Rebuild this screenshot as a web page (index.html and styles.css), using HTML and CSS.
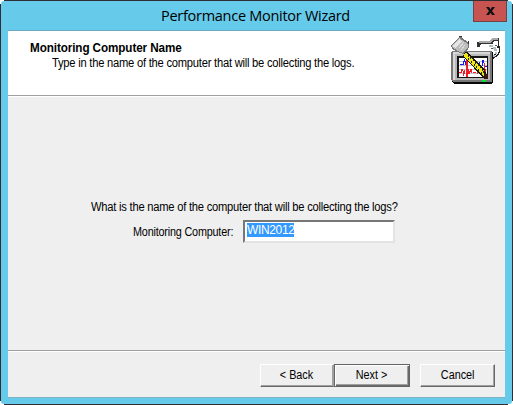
FILE: index.html
```html
<!DOCTYPE html>
<html lang="en">
<head>
<meta charset="utf-8">
<title>Performance Monitor Wizard</title>
<link rel="stylesheet" href="styles.css">
</head>
<body>
<div class="window">
  <header class="titlebar">
    <span class="title">Performance Monitor Wizard</span>
    <button class="close" aria-label="Close"><svg width="9" height="8" viewBox="0 0 9 8"><path d="M0 0h3l1.500 2.300L6 0h3L6 4l3 4H6L4.500 5.700 3 8H0l3-4z" fill="#111"/></svg></button>
  </header>
  <main class="content">
    <section class="banner">
      <div class="heading">
        <h1><span class="fit heading-text">Monitoring Computer Name</span></h1>
        <p class="subtitle"><span class="fit">Type in the name of the computer that will be collecting the logs.</span></p>
      </div>
      <svg class="icon" width="50" height="50" viewBox="0 0 50 50" shape-rendering="crispEdges">
        <path d="M3 17h40v30l-2 2H4l-2-2z" fill="#080808"/>
        <path d="M2 16h40v31H3l-2-2V18z" fill="#777"/>
        <path d="M3 17h37v2H5v26H3z" fill="#d8d8d8"/>
        <path d="M5 19h35v26H5z" fill="#b8b8b8"/>
        <path d="M7 21h31v22H7z" fill="#151515"/>
        <path d="M9 23h28v19H9z" fill="#fff"/>
        <path d="M9 26.500h28M9 30.500h28M9 34.500h28M9 38.500h28" stroke="#c4c4d0"/>
        <path d="M10 29.500h3M13.500 26v4M14.500 24v3M15.500 26v4M24.500 27v4M25 28.500h3M32.500 25v6M33.500 25v3M34 31.500h3M29.500 27v3" stroke="#1818f4" fill="none"/>
        <path d="M9 37.500h2M11.500 34v4M12.500 34v2M13.500 36v5M14.500 35v4M18.500 34v5M19.500 36v3M20.500 34v3M21.500 34v4M23 37.500h3M27.500 36v3M34.500 28v7M35.500 34v3" stroke="#ed1c24" fill="none"/>
        <path d="M17 22v20" stroke="#ed1c24" stroke-width="2"/>
        <path d="M13 19l3-2h1l18 18 2 7v2h-3L14 22z" fill="#181800"/>
        <path d="M13 19l3-1 18 18 1 5h-2L14 21z" fill="#eee51c"/>
        <path d="M18 21h1M20 23h1M18 24h1M23 25h1M21 27h1M25 28h1M24 30h1M28 30h1M26 32h1M30 32h1M28 35h1M32 35h1M31 38h1M33 37h1" stroke="#292900" stroke-width="1.500"/>
        <path d="M34 39h4v5h-3z" fill="#3b1515"/>
        <path d="M32 45h4v2h-4z" fill="#00e332"/>
        <path d="M1 10L9 2h2l8 6v3l-1 4-5 4-3-1-8-4z" fill="#777"/>
        <path d="M2 10L9 3l9 6v3l-5 6-3-1-7-4z" fill="#bcbcbc"/>
        <path d="M3 10l6-6 3 2-6 7-3-1z" fill="#e5e5e5"/>
        <path d="M9 13l5-6M11 15l4-5" fill="none" stroke="#ddd"/>
        <path d="M9 1.500h3M18.500 6v3" stroke="#333"/>
        <path d="M27 10V7l3-1h9l3-3h7v3h-5l-1 3H31l-1 3h-3z" fill="#333"/>
        <path d="M29 7h11l3-3h5" fill="none" stroke="#a9a9a9" stroke-width="2"/>
        <path d="M48.500 6v4l-1 2h2v5l-2 3-4 3v-2l3-3" fill="none" stroke="#252525" stroke-width="1.300"/>
        <path d="M39 11h4M43 13h3M44 15h3M45 18h2M43 21h2" stroke="#b1bcbc" stroke-width="2"/>
        <path d="M41 13h2M45 10h2" stroke="#555" stroke-width="1"/>
      </svg>
    </section>
    <section class="body">
      <p class="question"><span class="fit">What is the name of the computer that will be collecting the logs?</span></p>
      <div class="field">
        <span class="label"><span class="fit label-text">Monitoring Computer:</span></span>
        <div class="input"><span class="selected">WIN2012</span></div>
      </div>
    </section>
    <footer class="actions">
      <button class="btn back"><span class="btn-text">&lt; Back</span></button>
      <button class="btn primary"><span class="btn-text">Next &gt;</span></button>
      <button class="btn cancel"><span class="btn-text">Cancel</span></button>
    </footer>
  </main>
</div>
</body>
</html>
```
FILE: styles.css
```css
* { box-sizing: border-box; }
body {
  margin: 0;
  padding: 1px;
  width: 513px;
  height: 405px;
  overflow: hidden;
  background:
    linear-gradient(#302e35, #302e35) 4px 0 / 504px 405px no-repeat,
    linear-gradient(#302e35, #302e35) 0 4px / 513px 397px no-repeat,
    #fff;
  font: 12px/14px "Liberation Sans", Arial, sans-serif;
  color: #000;
}
h1, p { margin: 0; white-space: nowrap; }
button { padding: 0; font: inherit; color: inherit; }
.window {
  width: 511px;
  height: 403px;
  padding: 0 7px;
  border-radius: 3px;
  background: #66caea;
}
.titlebar {
  position: relative;
  height: 29px;
  display: flex;
  justify-content: center;
}
.title {
  font: 14.5px/29px "Open Sans", "Noto Sans", sans-serif;
  letter-spacing: -0.28px;
  margin-right: 2px;
  white-space: nowrap;
}
.close {
  position: absolute;
  top: 0;
  right: -2px;
  width: 34px;
  height: 21px;
  display: flex;
  align-items: center;
  justify-content: center;
  border: 1px solid #763f43;
  border-top: 0;
  background: #c75450;
}
.content {
  height: 368px;
  display: flex;
  flex-direction: column;
  border-top: 1px solid #6ba9be;
  border-bottom: 1px solid #80b3c4;
  background: #efefef;
}
.banner {
  height: 66px;
  flex: none;
  display: flex;
  justify-content: space-between;
  padding: 4px 5px 0 22px;
  border-bottom: 1px solid #fff;
  background: #fff;
  box-shadow: inset 0 -1px #a0a0a0;
}
.heading { padding-top: 6px; }
h1 {
  font-size: 12px;
  line-height: 14px;
  letter-spacing: -0.1px;
}
.fit {
  display: inline-block;
  transform: scaleX(0.932);
  transform-origin: left;
}
.heading-text { transform: scaleX(0.975); }
.label-text { transform: scaleX(0.9); }
.subtitle { padding: 1px 0 0 22px; letter-spacing: -0.25px; }
.icon { flex: none; }
.body { flex: 1; padding: 103px 0 0 83px; }
.question { letter-spacing: -0.25px; }
.field { display: flex; margin-top: 6px; padding-left: 42px; }
.label { width: 110px; flex: none; padding-top: 5px; white-space: nowrap; letter-spacing: -0.2px; }
.input {
  width: 152px;
  height: 23px;
  padding: 1px 2px;
  border: 2px solid;
  border-color: #777 #e3e3e3 #e3e3e3 #777;
  background: #fff;
}
.selected {
  display: block;
  width: 47px;
  height: 14px;
  background: #3399ff;
  color: #fff;
  white-space: nowrap;
  letter-spacing: -0.35px;
}
.actions {
  height: 47px;
  flex: none;
  display: flex;
  padding: 13px 10px 0 0;
  justify-content: flex-end;
  border-top: 1px solid #a0a0a0;
  box-shadow: inset 0 1px #fff;
}
.btn {
  width: 75px;
  height: 23px;
  padding-bottom: 2px;
  border: 1px solid;
  border-color: #fff #696969 #696969 #fff;
  background: #efefef;
  box-shadow: inset -1px -1px #a0a0a0;
}
.btn-text { display: inline-block; transform: scaleX(0.9); }
.back { width: 74px; border-right-color: #a0a0a0; }
.primary {
  width: 76px;
  border: 1px solid #646464;
  box-shadow: inset 1px 1px #fff, inset -1px -1px #696969, inset -2px -2px #a0a0a0;
}
.cancel { margin-left: 10px; }
```
